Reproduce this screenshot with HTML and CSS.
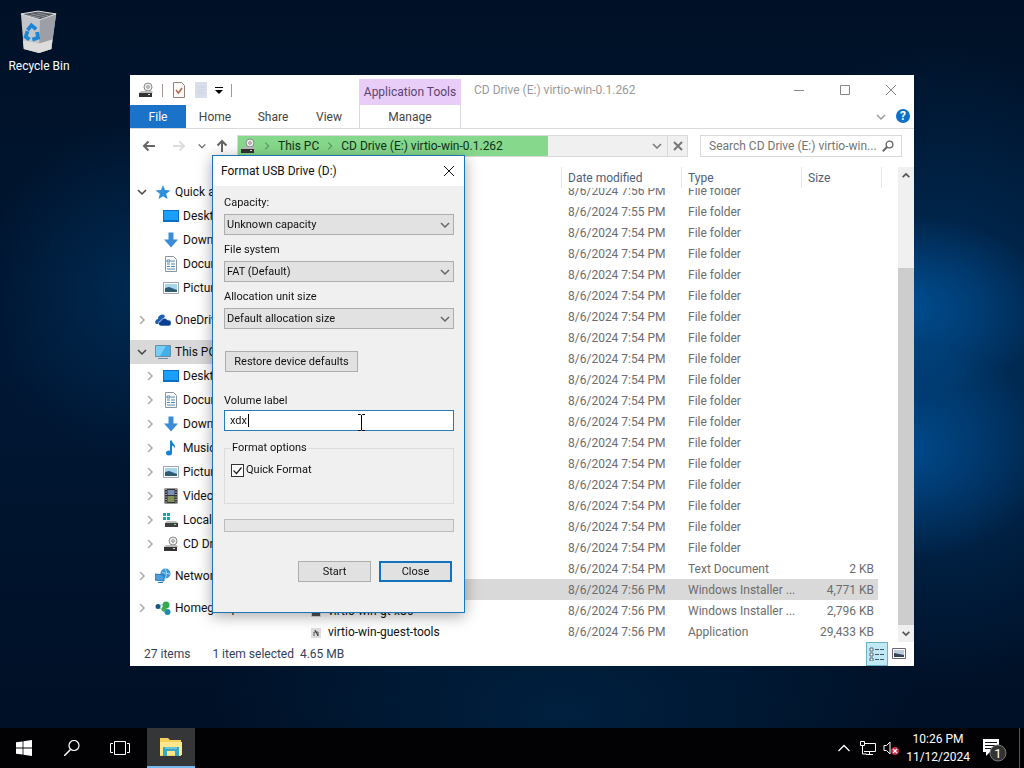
FILE: index.html
```html
<!DOCTYPE html>
<html lang="en">
<head>
  <meta charset="UTF-8">
  <title>Format USB Drive (D:)</title>
  <link rel="stylesheet" href="styles.css">
</head>
<body>

  <!-- shared icons -->
  <svg class="sprites" aria-hidden="true">
    <symbol id="i-drive" viewBox="0 0 16 16">
      <circle cx="10" cy="5" r="4" fill="#eee" stroke="#8a8a8a"/>
      <circle cx="10" cy="5" r="1.3" fill="#fff" stroke="#8a8a8a"/>
      <path d="M3 9h11l1 2H1z" fill="#bbb"/>
      <rect x="1" y="11" width="13" height="4" fill="#333"/>
      <rect x="10" y="12" width="2" height="1" fill="#ddd"/>
    </symbol>
    <symbol id="i-down" viewBox="0 0 12 12"><path d="M2 4l4 4 4-4" fill="none" stroke="currentColor" stroke-width="1.5"/></symbol>
    <symbol id="i-right" viewBox="0 0 12 12"><path d="M4 2l4 4-4 4" fill="none" stroke="currentColor" stroke-width="1.5"/></symbol>
    <symbol id="i-up" viewBox="0 0 12 12"><path d="M2 8l4-4 4 4" fill="none" stroke="currentColor" stroke-width="2"/></symbol>
    <symbol id="i-x" viewBox="0 0 12 12"><path d="M1 1l10 10M11 1L1 11" fill="none" stroke="currentColor"/></symbol>
    <symbol id="i-arrow" viewBox="0 0 14 14"><path d="M13 7H2M6.5 2.5L2 7l4.500 4.500" fill="none" stroke="currentColor" stroke-width="2"/></symbol>
    <symbol id="i-star" viewBox="0 0 16 16"><path d="M8 1l2 5 5.500.4-4.300 3.400 1.300 5.200L8 12.200 3.500 15l1.400-5.200L.5 6.400 6 6z" fill="#2d8fdd"/></symbol>
    <symbol id="i-desktop" viewBox="0 0 16 16"><path d="M0 2h16v12H0z" fill="#0a6fc4"/><path d="M1 3h14v9H1z" fill="#1aa0fa"/></symbol>
    <symbol id="i-download" viewBox="0 0 16 16"><path d="M5.500 0.500h5v7h4.500L8 15.500 1 7.500h4.500z" fill="#3a8bd8"/></symbol>
    <symbol id="i-doc" viewBox="0 0 16 16">
      <path d="M2.500.5h8l3 3v12h-11z" fill="#fff" stroke="#8a959d"/>
      <path d="M4 4h3v2H4zM8 5h4M4 8h3M8 8h4M4 10.500h3M8 10.500h4M4 13h8" fill="none" stroke="#4d87b5"/>
    </symbol>
    <symbol id="i-picture" viewBox="0 0 16 16">
      <path d="M.5 2.500h15v11H.5z" fill="#fff" stroke="#9aa4aa"/>
      <path d="M2 4h12v8H2z" fill="#a9d4ee"/><path d="M2 8l4-1 8 3v2H2z" fill="#2d5b73"/>
    </symbol>
    <symbol id="i-cloud" viewBox="0 0 16 16">
      <path d="M1 12a3 3 0 0 1 2-5 4 4 0 0 1 7-3L6 12z" fill="#1a5fb0"/>
      <path d="M6 14a2.500 2.500 0 0 1 0-5 3.500 3.500 0 0 1 6.500-1A3 3 0 0 1 14 14z" fill="#0b3f91" stroke="#fff" stroke-width=".6"/>
    </symbol>
    <symbol id="i-pc" viewBox="0 0 16 16">
      <path d="M.5 1.500h15v11H.5z" fill="#3fb0ec" stroke="#6a8ea5"/><path d="M1 2h10L5 12H1z" fill="#78cdf6"/>
      <path d="M3 14.500h10" stroke="#6a8ea5"/>
    </symbol>
    <symbol id="i-music" viewBox="0 0 16 16">
      <path d="M7 .5h2c0 3 4 4 3 8-.5-2-2-2.500-3-2.700V13H7z" fill="#1683d0"/><ellipse cx="6" cy="13" rx="3" ry="2.500" fill="#1683d0"/>
    </symbol>
    <symbol id="i-video" viewBox="0 0 16 16">
      <path d="M1.500.5h13v15h-13z" fill="#333"/><path d="M4.500 2h7v5h-7z" fill="#7b8fb8"/><path d="M4.500 8h7v6h-7z" fill="#83915b"/>
      <path d="M3 1v14M13 1v14" stroke="#fff" stroke-dasharray="1 1.500"/>
    </symbol>
    <symbol id="i-disk" viewBox="0 0 16 16">
      <path d="M0 1h3v3H0zM4 1h3v3H4zM0 5h3v3H0zM4 5h3v3H4z" fill="#17a8ad"/>
      <path d="M4 9h9l2 2H2z" fill="#bbb"/><path d="M2 11h13v4H2z" fill="#3f3f3f"/><path d="M11 12h2v1h-2z" fill="#8fe08f"/>
    </symbol>
    <symbol id="i-network" viewBox="0 0 16 16">
      <circle cx="10.500" cy="5.500" r="5" fill="#3b95d9"/><path d="M7 4c3 2 5 1 8 2M10 1c2 3 2 6 0 9" fill="none" stroke="#a8d8f5"/>
      <path d="M0 6l9 1v6l-9-1z" fill="#4a9fe0" stroke="#2476b8"/><path d="M3 14.500h5" stroke="#2476b8"/>
    </symbol>
    <symbol id="i-home" viewBox="0 0 16 16">
      <path d="M4 6l7-3M5 8l6 5" stroke="#8ac4dd"/><circle cx="3" cy="6.500" r="2.500" fill="#165a86"/>
      <circle cx="11" cy="5" r="3.500" fill="#35a852"/><circle cx="12.500" cy="12" r="3" fill="#1d8bb5"/><circle cx="9" cy="9" r="2.500" fill="#3fae49"/>
    </symbol>
    <symbol id="i-installer" viewBox="0 0 12 12">
      <path d="M1 2h10v9H1z" fill="#d8d8d8"/><path d="M3 10V5l2-1v6M9 10V5L7 4v6" fill="none" stroke="#222" stroke-width="1.500"/>
    </symbol>
    <symbol id="i-app" viewBox="0 0 12 12">
      <path d="M1 1h10v10H1z" fill="#ddd"/><path d="M4 9V5h4v4" fill="none" stroke="#555"/><path d="M5 3l3 6" stroke="#333"/>
    </symbol>
    <symbol id="i-search" viewBox="0 0 16 16">
      <circle cx="10" cy="6" r="4.500" fill="none" stroke="currentColor" stroke-width="1.800"/><path d="M7 9l-6 6" stroke="currentColor" stroke-width="2.500"/>
    </symbol>
  </svg>

  <main class="desktop">
    <div class="shortcut">
      <svg class="bin" viewBox="0 0 40 44" aria-hidden="true">
        <path d="M1 3L19 0l19 3-5 37-13 4-16-4z" fill="#c3c5c9"/>
        <path d="M21 9l17-6-5 37-13 4z" fill="#9c9fa6"/>
        <path d="M1 3L19 0l19 3-17 6z" fill="#555a60" stroke="#e4e4e4"/>
        <path d="M7 4l14 3M12 3l14 3M18 2l12 3" stroke="#92979c"/>
        <path d="M3 31l17 3 14-4-1 10-13 4-16-4z" fill="#dcdcdc"/>
        <path d="M8 20l4-5 5 4M18 22l1 6-6 2M10 30l-4-3 2-6" fill="none" stroke="#1b86d6" stroke-width="4"/>
      </svg>
      <span>Recycle Bin</span>
    </div>

    <section class="explorer" aria-label="CD Drive (E:) virtio-win-0.1.262">
      <header class="titlebar">
        <div class="quickbar">
          <svg class="icon"><use href="#i-drive"/></svg>
          <i class="sep"></i>
          <svg class="icon" viewBox="0 0 16 16"><path d="M2.500.5h8l3 3v12h-11z" fill="#fffaf7" stroke="#93807a"/><path d="M5 8l2.500 3L11 6" fill="none" stroke="#b0664a" stroke-width="1.500"/></svg>
          <svg class="icon" viewBox="0 0 16 16"><path d="M2 0h12v16H2z" fill="#d8dfeb"/><path d="M4 5h8M4 8h8M4 11h8" stroke="#cbd5e3"/></svg>
          <svg class="more" viewBox="0 0 8 8"><path d="M0 1.500h8" stroke="#000"/><path d="M0 4h8L4 8z"/></svg>
          <i class="sep"></i>
        </div>
        <div class="tools">Application Tools</div>
        <h1>CD Drive (E:) virtio-win-0.1.262</h1>
        <div class="winbuttons">
          <button aria-label="Minimize"><svg viewBox="0 0 12 12"><path d="M1 6.500h10" stroke="currentColor"/></svg></button>
          <button aria-label="Maximize"><svg viewBox="0 0 12 12"><path d="M1.500 1.500h9v9h-9z" fill="none" stroke="currentColor"/></svg></button>
          <button aria-label="Close window"><svg><use href="#i-x"/></svg></button>
        </div>
      </header>

      <nav class="ribbon">
        <button class="file">File</button>
        <button class="tab-home">Home</button>
        <button class="tab-share">Share</button>
        <button class="tab-view">View</button>
        <button class="manage">Manage</button>
        <svg class="expand"><use href="#i-down"/></svg>
        <button class="help" aria-label="Help">?</button>
      </nav>

      <div class="addressrow">
        <div class="arrows">
          <button aria-label="Back"><svg><use href="#i-arrow"/></svg></button>
          <button class="off" aria-label="Forward"><svg class="flip"><use href="#i-arrow"/></svg></button>
          <button class="recent" aria-label="Recent locations"><svg><use href="#i-down"/></svg></button>
          <button aria-label="Up"><svg class="turn"><use href="#i-arrow"/></svg></button>
        </div>
        <div class="address">
          <div class="crumbs">
            <svg class="icon"><use href="#i-drive"/></svg>
            <svg class="crumbsep"><use href="#i-right"/></svg>
            <a href="#pc">This PC</a>
            <svg class="crumbsep"><use href="#i-right"/></svg>
            <a href="#cd">CD Drive (E:) virtio-win-0.1.262</a>
          </div>
          <button aria-label="Previous locations"><svg><use href="#i-down"/></svg></button>
          <button class="stop" aria-label="Stop"><svg viewBox="0 0 10 10"><path d="M1 1l8 8M9 1L1 9" stroke="currentColor" stroke-width="2"/></svg></button>
        </div>
        <div class="search">
          <input type="text" aria-label="Search" placeholder="Search CD Drive (E:) virtio-win...">
          <svg><use href="#i-search"/></svg>
        </div>
      </div>

      <div class="panes">
        <nav class="tree" id="tree"></nav>
        <div class="files" id="files">
          <table>
            <colgroup><col><col class="c-date"><col class="c-type"><col class="c-size"></colgroup>
            <thead>
              <tr><th></th><th>Date modified</th><th>Type</th><th>Size</th></tr>
            </thead>
            <tbody id="rows"></tbody>
          </table>
        </div>
        <div class="scrollbar" aria-hidden="true">
          <svg><use href="#i-up"/></svg>
          <div class="track"><div class="thumb"></div></div>
          <svg class="turned"><use href="#i-up"/></svg>
        </div>
      </div>

      <footer class="status">
        <span>27 items</span>
        <span>1 item selected&nbsp; 4.65 MB</span>
        <div class="views">
          <button class="on" aria-label="Details"><svg viewBox="0 0 16 14"><path d="M1 1h3v3H1zM1 6h3v3H1zM1 11h3v3H1z" fill="#fff" stroke="#567"/><path d="M6 2.500h4M11 2.500h4M6 7.500h4M11 7.500h4M6 12.500h4M11 12.500h4" stroke="#456"/></svg></button>
          <button aria-label="Large icons"><svg viewBox="0 0 16 14"><path d="M1.500 1.500h13v10h-13z" fill="#fff" stroke="#667"/><path d="M3 3h10v7H3z" fill="#bcd"/><path d="M3 6l5 1 5 1v2H3z" fill="#345"/></svg></button>
        </div>
      </footer>
    </section>

    <form class="dialog" aria-label="Format USB Drive (D:)">
      <div class="dialog-title">
        <h2>Format USB Drive (D:)</h2>
        <button type="button" aria-label="Close dialog"><svg><use href="#i-x"/></svg></button>
      </div>
      <div class="dialog-body">
        <label for="capacity">Capacity:</label>
        <div class="select"><select id="capacity"><option>Unknown capacity</option></select><svg><use href="#i-down"/></svg></div>
        <label for="fs">File system</label>
        <div class="select"><select id="fs"><option>FAT (Default)</option></select><svg><use href="#i-down"/></svg></div>
        <label for="alloc">Allocation unit size</label>
        <div class="select"><select id="alloc"><option>Default allocation size</option></select><svg><use href="#i-down"/></svg></div>

        <button type="button" class="restore">Restore device defaults</button>

        <label for="volume">Volume label</label>
        <div class="volume">
          <input type="text" id="volume" value="xdx">
          <i class="caret"></i>
          <svg class="ibeam" viewBox="0 0 9 17" aria-hidden="true"><path d="M1 .5h2.500l1 1 1-1H8M1 16.500h2.500l1-1 1 1H8M4.500 1v15" fill="none" stroke="#000"/></svg>
        </div>

        <fieldset>
          <legend>Format options</legend>
          <label class="check"><input type="checkbox" checked><svg viewBox="0 0 13 13"><path d="M2.500 6.500l3 3 5-6" fill="none" stroke="#222" stroke-width="1.300"/></svg>Quick Format</label>
        </fieldset>

        <div class="progress" role="progressbar" aria-label="Format progress"></div>

        <div class="actions">
          <button type="button">Start</button>
          <button type="button" class="default">Close</button>
        </div>
      </div>
    </form>
  </main>

  <footer class="taskbar">
    <button aria-label="Start menu"><svg viewBox="0 0 16 16"><path d="M0 2.300L6.600 1.400v6.200H0zM7.400 1.300L16 0v7.600H7.400zM0 8.400h6.600v6.200L0 13.700zM7.400 8.400H16V16l-8.600-1.200z" fill="#fff"/></svg></button>
    <button aria-label="Search Windows"><svg viewBox="0 0 16 16"><circle cx="10" cy="5.500" r="5" fill="none" stroke="#fff" stroke-width="1.200"/><path d="M6.500 9.500L0 16" stroke="#fff" stroke-width="1.500"/></svg></button>
    <button aria-label="Task view"><svg class="wide" viewBox="0 0 20 16"><path d="M4.500 1.500h11v13h-11zM3 3.500H.5v9H3M17 3.500h2.500v9H17" fill="none" stroke="#fff"/></svg></button>
    <button class="active" aria-label="File Explorer"><svg class="folder" viewBox="0 0 22 20"><path d="M0 1h8l2 2h11v16H0z" fill="#f5cf5f"/><path d="M0 5h22v13H0z" fill="#fde68c"/><path d="M3 10h16v9h-4v-5H7v5H3z" fill="#35a6c4"/><path d="M5 10h12v2H5z" fill="#68c4d8"/></svg></button>
    <div class="tray">
      <svg class="t-up" viewBox="0 0 12 8"><path d="M.5 7L6 1.500 11.500 7" fill="none" stroke="#fff" stroke-width="1.300"/></svg>
      <svg viewBox="0 0 16 16"><path d="M4 3.500h11.500v8H4M9.500 12v3M6 14.500h7M.5 1.500h4v4h-4zM2.500 6v8h4" fill="none" stroke="#fff"/></svg>
      <svg viewBox="0 0 16 16"><path d="M1 5.500h2.500L7 2v12l-3.500-3.500H1z" fill="none" stroke="#fff"/><circle cx="12" cy="11" r="4" fill="#cf2144"/><path d="M10 9l4 4M14 9l-4 4" stroke="#fff" stroke-width="1.300"/></svg>
      <div class="clock">10:26 PM<br>11/12/2024</div>
      <svg class="note" viewBox="0 0 26 24"><path d="M2 1h16v13H9l-4 4v-4H2z" fill="#fff"/><path d="M4 4.500h12M4 7.500h12M4 10.500h8" stroke="#111"/><circle cx="17" cy="15" r="8" fill="#333" stroke="#777"/><text x="17" y="20" text-anchor="middle" fill="#fff" font-size="13">1</text></svg>
      <i class="peek"></i>
    </div>
  </footer>

  <script>
    // depth, state (open / closed / none), icon, name
    const tree=[
      [[0,'open','star','Quick access'],[1,'','desktop','Desktop'],[1,'','download','Downloads'],[1,'','doc','Documents'],[1,'','picture','Pictures']],
      [[0,'closed','cloud','OneDrive']],
      [[0,'open','pc','This PC'],[1,'closed','desktop','Desktop'],[1,'closed','doc','Documents'],[1,'closed','download','Downloads'],[1,'closed','music','Music'],[1,'closed','picture','Pictures'],[1,'closed','video','Videos'],[1,'closed','disk','Local Disk (C:)'],[1,'closed','drive','CD Drive (E:)']],
      [[0,'closed','network','Network']],
      [[0,'closed','home','Homegroup']]
    ];
    const arrow={open:'<svg class="open"><use href="#i-down"/></svg>',closed:'<svg><use href="#i-right"/></svg>','':'<svg></svg>'};
    document.getElementById('tree').innerHTML=tree.map(g=>'<ul>'+g.map(([d,s,i,n])=>
      `<li class="${d?'child':''}${n==='This PC'?' current':''}">${arrow[s]}<svg class="icon"><use href="#i-${i}"/></svg>${n}</li>`).join('')+'</ul>').join('');

    const folders=['data','guest-agent','i386','NetKVM','pvpanic','qemufwcfg','qemupciserial','qxldod','smbus','sriov','viofs','viogpudo','vioinput','viomem','viorng','vioscsi','vioserial','viostor'];
    const rows=folders.map((n,i)=>[n,i===0?'7:56':i===1?'7:55':'7:54','File folder','','']);
    rows.push(['virtio-win_license','7:54','Text Document','2 KB','doc'],
      ['virtio-win-gt-x64','7:56','Windows Installer ...','4,771 KB','installer'],
      ['virtio-win-gt-x86','7:56','Windows Installer ...','2,796 KB','installer'],
      ['virtio-win-guest-tools','7:56','Application','29,433 KB','app']);
    document.getElementById('rows').innerHTML=rows.map(([n,t,type,size,icon])=>
      `<tr${n==='virtio-win-gt-x64'?' class="selected"':''}><td>${icon?`<svg><use href="#i-${icon}"/></svg>`:''}${n}</td><td>8/6/2024 ${t} PM</td><td>${type}</td><td>${size}</td></tr>`).join('');
    const files=document.getElementById('files');
    files.scrollTop=files.scrollHeight;
  </script>

</body>
</html>
```
FILE: styles.css
```css
* {
  box-sizing: border-box;
}
body {
  margin: 0;
  height: 100vh;
  display: flex;
  flex-direction: column;
  overflow: hidden;
  font-family: Roboto, "Noto Sans", sans-serif;
  font-size: 12px;
  line-height: 16px;
  color: #111;
}
button, input, select {
  font: inherit;
  color: inherit;
  margin: 0;
  padding: 0;
  border: 0;
  border-radius: 0;
  background: none;
}
svg {
  display: block;
  flex: none;
  width: 12px;
  height: 12px;
}
.icon {
  width: 16px;
  height: 16px;
}
.sprites {
  position: absolute;
  width: 0;
  height: 0;
}

/* desktop */
.desktop {
  position: relative;
  flex: 1;
  background:
    radial-gradient(ellipse 150px 90px at 88% 42%, rgba(0,86,160,0.8), rgba(0,60,120,0) 100%),
    radial-gradient(ellipse 150px 110px at 88% 62%, rgba(0,82,155,0.8), rgba(0,60,120,0) 100%),
    radial-gradient(ellipse 240px 320px at 92% 50%, #003260, rgba(0,24,54,0) 100%),
    radial-gradient(ellipse 150px 170px at 13% 40%, #002a52, rgba(0,24,54,0) 100%),
    radial-gradient(ellipse 360px 200px at 55% 98%, #00203f, rgba(0,20,46,0) 100%),
    linear-gradient(#001127, #001734 50%, #001026);
}
.shortcut {
  width: 78px;
  padding-top: 10px;
  display: flex;
  flex-direction: column;
  align-items: center;
  gap: 4px;
  color: #fff;
}
.bin {
  width: 38px;
  height: 44px;
}

/* explorer window */
.explorer {
  position: absolute;
  left: 130px;
  top: 75px;
  width: 784px;
  height: 591px;
  display: flex;
  flex-direction: column;
  background: #fff;
}
.titlebar {
  display: flex;
  height: 30px;
}
.quickbar {
  width: 229px;
  display: flex;
  align-items: center;
  gap: 6px;
  padding-left: 8px;
}
.sep {
  width: 1px;
  height: 13px;
  margin: 0 2px;
  background: #a09a96;
}
.more {
  width: 8px;
  height: 8px;
}
.tools {
  width: 102px;
  margin-top: 4px;
  line-height: 26px;
  text-align: center;
  background: #e8cdf8;
  color: #5b4370;
}
.titlebar h1 {
  flex: 1;
  margin: 0;
  padding-left: 13px;
  font-size: 12px;
  font-weight: normal;
  line-height: 30px;
  color: #999;
}
.winbuttons {
  display: flex;
  color: #888;
}
.winbuttons button {
  width: 46px;
  display: grid;
  place-items: center;
}
.ribbon {
  display: flex;
  align-items: stretch;
  height: 24px;
  border-bottom: 1px solid #dadbdc;
  color: #444;
}
.ribbon .file {
  width: 56px;
  background: #1a73c8;
  color: #fff;
}
.tab-home, .tab-share {
  width: 58px;
}
.tab-view {
  width: 54px;
  margin-right: 3px;
}
.ribbon .manage {
  width: 102px;
  border: solid #dcd6e0;
  border-width: 0 1px;
}
.expand {
  margin: 6px 9px 0 auto;
  color: #999;
}
.ribbon .help {
  width: 14px;
  height: 14px;
  margin: 4px 4px 0 0;
  border-radius: 50%;
  background: #0b6fc7;
  color: #fff;
  font-weight: bold;
  line-height: 14px;
}

/* address bar */
.addressrow {
  display: flex;
  height: 38px;
  padding: 6px 12px 10px;
}
.arrows {
  width: 95px;
  display: flex;
  align-items: center;
  gap: 16px;
  color: #666;
}
.arrows svg {
  width: 14px;
  height: 14px;
}
.arrows .off {
  color: #ddd;
}
.arrows .recent svg {
  width: 10px;
  height: 10px;
}
.arrows .recent {
  margin: 0 -8px 0 -5px;
}
.flip {
  transform: scaleX(-1);
}
.turn {
  transform: rotate(90deg);
}
.address {
  flex: 1;
  display: flex;
  border: 1px solid #d9d9d9;
  background: linear-gradient(90deg, #86d88c 69%, #f0f0f0 69%);
}
.crumbs {
  flex: 1;
  display: flex;
  align-items: center;
  padding-left: 2px;
  line-height: 20px;
}
.crumbs a {
  color: #10301a;
  text-decoration: none;
}
.crumbsep {
  margin: 0 6px;
  color: #5c9a68;
  width: 10px;
  height: 10px;
}
.address button {
  width: 20px;
  display: grid;
  place-items: center;
  color: #777;
}
.address .stop {
  border-left: 1px solid #d9d9d9;
}
.stop svg {
  width: 10px;
  height: 10px;
}
.search {
  width: 202px;
  margin-left: 12px;
  display: flex;
  align-items: center;
  padding: 0 7px 0 8px;
  border: 1px solid #d9d9d9;
}
.search input {
  flex: 1;
  min-width: 0;
  outline: 0;
}
.search input::placeholder {
  color: #757575;
}
.search svg {
  color: #666;
}

/* navigation tree and list */
.panes {
  flex: 1;
  display: flex;
  min-height: 0;
}
.tree {
  width: 161px;
  padding-top: 13px;
  overflow: hidden;
}
.tree ul {
  margin: 0 0 8px;
  padding: 0;
  list-style: none;
}
.tree li {
  display: flex;
  align-items: center;
  height: 24px;
  padding-left: 6px;
  white-space: nowrap;
}
.tree li > svg:first-child {
  margin-right: 7px;
  color: #aaa;
}
.tree li > .open:first-child {
  color: #444;
}
.tree .icon {
  margin-right: 4px;
}
.tree .child {
  padding-left: 14px;
}
.tree .current {
  background: #d9d9d9;
}
.files {
  flex: 1;
  overflow: hidden;
}
.files table {
  width: 591px;
  table-layout: fixed;
  border-collapse: separate;
  border-spacing: 0;
  color: #6d6d6d;
}
.c-date, .c-type {
  width: 120px;
}
.c-size {
  width: 80px;
}
.files th {
  position: sticky;
  top: 0;
  height: 21px;
  padding: 0 0 0 6px;
  background: #fff;
  border-right: 1px solid #e5e5e5;
  text-align: left;
  font-weight: normal;
  color: #4c607a;
}
.files td {
  height: 21px;
  padding: 0 0 0 6px;
  white-space: nowrap;
  overflow: hidden;
}
.files td:first-child {
  padding-left: 37px;
  color: #111;
}
.files td svg {
  float: left;
  margin: 3px 6px 0 -18px;
}
.files td:last-child {
  padding-right: 4px;
  border-right: 4px solid #fff;
  text-align: right;
}
.selected td {
  background: #d9d9d9;
}
.scrollbar {
  width: 16px;
  display: flex;
  flex-direction: column;
  align-items: center;
  background: #f0f0f0;
  color: #555;
}
.scrollbar svg {
  width: 10px;
  height: 17px;
}
.turned {
  transform: rotate(180deg);
}
.track {
  flex: 1;
  width: 100%;
  display: flex;
  flex-direction: column;
  justify-content: flex-end;
}
.thumb {
  height: 81%;
  background: #cdcdcd;
}
.status {
  display: flex;
  align-items: center;
  gap: 22px;
  height: 24px;
  padding-left: 14px;
  color: #33415c;
}
.views {
  align-self: stretch;
  display: flex;
  margin-left: auto;
  padding-right: 4px;
}
.views button {
  width: 22px;
  display: grid;
  place-items: center;
}
.views .on {
  background: #bfe9f5;
  border: 1px solid #6ab4c8;
}
.views svg {
  width: 16px;
  height: 14px;
}

/* format dialog */
.dialog {
  position: absolute;
  left: 212px;
  top: 155px;
  width: 253px;
  border: 1px solid #1c76b6;
  background: #f0f0f0;
  box-shadow: 0 3px 14px rgba(0,0,0,0.35);
  font-size: 11px;
  line-height: 14px;
  color: #111;
}
.dialog-title {
  display: flex;
  align-items: center;
  justify-content: space-between;
  height: 30px;
  padding: 0 9px 0 8px;
  background: #fff;
}
.dialog-title h2 {
  margin: 0;
  font-size: 12px;
  font-weight: normal;
}
.dialog-body {
  padding: 10px 10px 30px 11px;
  display: flex;
  flex-direction: column;
}
.select {
  display: grid;
  grid-template-columns: 1fr 15px;
  align-items: center;
  margin: 4px 0 8px;
}
.select select {
  grid-area: 1 / 1 / 2 / 3;
  height: 21px;
  padding-left: 2px;
  appearance: none;
  background: #e2e2e2;
  border: 1px solid #adadad;
}
.select svg {
  grid-area: 1 / 2;
  pointer-events: none;
  color: #666;
}
.restore {
  align-self: flex-start;
  width: 133px;
  height: 21px;
  margin: 14px 0 22px 1px;
  background: #e1e1e1;
  border: 1px solid #adadad;
}
.volume {
  position: relative;
  margin: 2px 0 10px;
}
.volume input {
  display: block;
  width: 100%;
  height: 21px;
  padding-left: 5px;
  background: #fff;
  border: 1px solid #2a7ab8;
  outline: 0;
}
.caret {
  position: absolute;
  left: 24px;
  top: 4px;
  width: 1px;
  height: 13px;
  background: #000;
}
.ibeam {
  position: absolute;
  left: 133px;
  top: 4px;
  width: 9px;
  height: 17px;
}
fieldset {
  height: 63px;
  margin: 0;
  padding: 8px 6px;
  border: 1px solid #dcdcdc;
}
legend {
  padding: 0 1px;
}
.check {
  display: grid;
  grid-template-columns: 13px auto;
  align-items: center;
  justify-content: start;
  column-gap: 2px;
}
.check input {
  grid-area: 1 / 1;
  appearance: none;
  width: 13px;
  height: 13px;
  background: #fff;
  border: 1px solid #333;
}
.check svg {
  grid-area: 1 / 1;
  width: 13px;
  height: 13px;
}
.progress {
  height: 13px;
  margin: 15px 0 29px;
  background: #e6e6e6;
  border: 1px solid #bcbcbc;
}
.actions {
  display: flex;
  justify-content: flex-end;
  gap: 8px;
  padding-right: 2px;
}
.actions button {
  width: 73px;
  height: 21px;
  background: #e1e1e1;
  border: 1px solid #adadad;
}
.actions .default {
  border: 2px solid #1273bd;
}

/* taskbar */
.taskbar {
  height: 40px;
  display: flex;
  background: #020205;
  color: #fff;
}
.taskbar > button {
  width: 48px;
  display: grid;
  place-items: center;
}
.taskbar > button svg {
  width: 16px;
  height: 16px;
}
.taskbar > button .wide {
  width: 20px;
}
.taskbar > button .folder {
  width: 22px;
  height: 20px;
}
.taskbar > .active {
  margin-left: 3px;
  background: #353637;
  border-bottom: 2px solid #76b9ed;
}
.tray {
  margin-left: auto;
  display: flex;
  align-items: center;
  gap: 7px;
  padding-right: 4px;
}
.tray svg {
  width: 16px;
  height: 16px;
}
.tray .t-up {
  height: 8px;
  width: 12px;
  margin-right: 3px;
}
.clock {
  text-align: center;
  line-height: 18px;
}
.tray .note {
  width: 26px;
  height: 24px;
  margin: 4px 0 0 4px;
}
.peek {
  align-self: stretch;
  width: 1px;
  margin-left: 5px;
  background: #555;
}
```
